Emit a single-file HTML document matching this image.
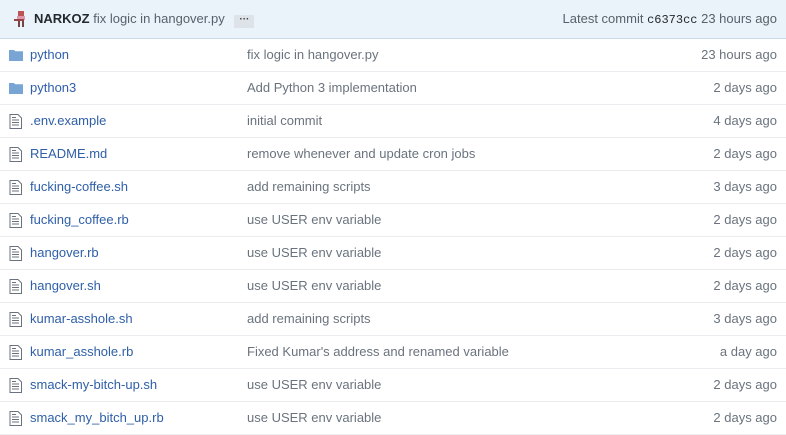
<!DOCTYPE html>
<html><head><meta charset="utf-8"><style>
body{margin:0;width:786px;height:434px;overflow:hidden;background:#fff;font-family:"Liberation Sans",Helvetica,Arial,sans-serif;font-size:13px}
.hd{height:38px;background:#eaf3fa;border-bottom:1px solid #c9dcea;position:relative;color:#586069}
.hd .av{position:absolute;left:12px;top:10px;width:18px;height:18px}
.hd .l{position:absolute;left:34px;top:11px;color:#586069}
.hd .l b{color:#24292e}
.dots{display:inline-block;background:#dde3e8;color:#444;font-size:10px;font-weight:bold;padding:0 5px;height:13px;line-height:10px;margin-left:6px;vertical-align:1px;border-radius:1px}
.hd .r{position:absolute;right:9px;top:11px}
.mono{font-family:"Liberation Mono",monospace;color:#24292e;font-size:12px}
.row{height:32px;border-bottom:1px solid #eaecef;position:relative}
.row svg{position:absolute;left:9px;top:9px}
.n{position:absolute;left:30px;top:8px;color:#0366d6;color:#2e5fa8}
.m{position:absolute;left:247px;top:8px;color:#6a737d}
.a{position:absolute;right:9px;top:8px;color:#6a737d}
</style></head><body>
<div class="hd">
<svg class="av" viewBox="0 0 18 18"><rect x="6" y="1" width="6" height="5" fill="#b55"/><rect x="5" y="6" width="8" height="4" fill="#d9a"/><rect x="2" y="9" width="10" height="2" fill="#944"/><rect x="6" y="11" width="2" height="6" fill="#744"/><rect x="10" y="11" width="2" height="6" fill="#744"/></svg>
<div class="l"><b>NARKOZ</b> fix logic in hangover.py <span class="dots">···</span></div>
<div class="r">Latest commit <span class="mono">c6373cc</span> 23 hours ago</div>
</div>
<div id="rows"></div>
<script>
var F='<svg width="14" height="14" viewBox="0 0 14 14"><path d="M0 2h5l1.2 1.3H14V13H0z" fill="#79a5d4"/></svg>';
var D='<svg width="13" height="15" viewBox="0 0 13 15"><path d="M1 .5h8l3.5 3.5v10.5H1z" fill="none" stroke="#6a737d"/><path d="M3 6h7M3 8.5h7M3 11h7M3 3.5h4" stroke="#6a737d"/></svg>';
var r=[[F,'python','fix logic in hangover.py','23 hours ago'],[F,'python3','Add Python 3 implementation','2 days ago'],[D,'.env.example','initial commit','4 days ago'],[D,'README.md','remove whenever and update cron jobs','2 days ago'],[D,'fucking-coffee.sh','add remaining scripts','3 days ago'],[D,'fucking_coffee.rb','use USER env variable','2 days ago'],[D,'hangover.rb','use USER env variable','2 days ago'],[D,'hangover.sh','use USER env variable','2 days ago'],[D,'kumar-asshole.sh','add remaining scripts','3 days ago'],[D,'kumar_asshole.rb','Fixed Kumar\'s address and renamed variable','a day ago'],[D,'smack-my-bitch-up.sh','use USER env variable','2 days ago'],[D,'smack_my_bitch_up.rb','use USER env variable','2 days ago']];
var h='';r.forEach(function(x){h+='<div class="row">'+x[0]+'<span class="n">'+x[1]+'</span><span class="m">'+x[2]+'</span><span class="a">'+x[3]+'</span></div>'});
document.getElementById('rows').innerHTML=h;
</script>
</body></html>
